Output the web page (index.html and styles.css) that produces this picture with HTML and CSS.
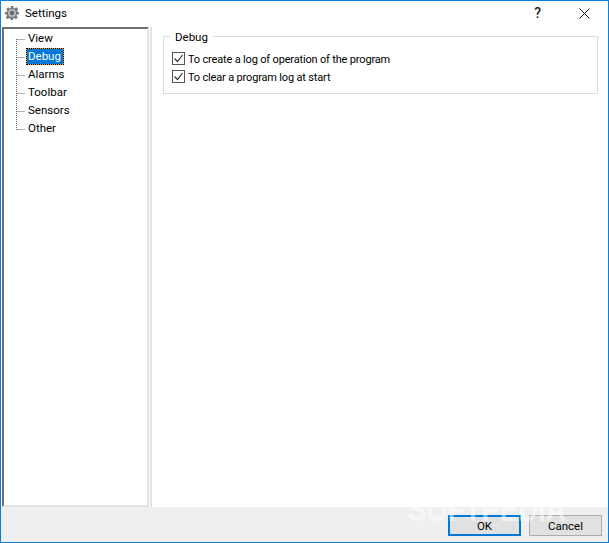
FILE: index.html
```html
<!DOCTYPE html>
<html lang="en">
<head>
<meta charset="utf-8">
<title>Settings</title>
<link rel="stylesheet" href="styles.css">
</head>
<body>
<div class="window">
  <header class="titlebar">
    <svg class="app-icon" viewBox="0 0 16 16" width="14" height="14">
      <path fill="#787878" d="M6.600 0h2.800l.4 2.200 1.300.6L13 1.500l2 2-1.300 1.900.6 1.300L16 7v2.400l-2.200.4-.6 1.300 1.300 1.900-2 2-1.900-1.300-1.300.6-.4 2.200H6.600l-.4-2.200-1.300-.6L3 15l-2-2 1.300-1.900-.6-1.300L0 9.400V7l2.200-.4.6-1.300L1.500 3.500l2-2 1.900 1.300 1.300-.6z"/>
      <circle cx="8" cy="8" r="4.600" fill="#bcbcbc"/>
      <circle cx="8" cy="8" r="2.600" fill="#666"/>
    </svg>
    <span class="title">Settings</span>
    <span class="help">?</span>
    <svg class="close" viewBox="0 0 11 11" width="11" height="11">
      <path d="M.5.5l10 10M10.500.5l-10 10" stroke="#1a1a1a" stroke-width="1" fill="none"/>
    </svg>
  </header>
  <main class="content">
    <nav class="tree">
      <svg class="tree-lines" width="10" height="92" viewBox="0 0 10 92">
        <path d="M.5 0V91M.5.5H9M.5 18.500H9M.5 36.500H9M.5 54.500H9M.5 72.500H9M.5 90.500H9" stroke="#666" stroke-width="1" stroke-dasharray="1 1" fill="none"/>
      </svg>
      <ul class="tree-list">
        <li class="tree-item"><span class="tree-label">View</span></li>
        <li class="tree-item"><span class="tree-label selected">Debug</span></li>
        <li class="tree-item"><span class="tree-label">Alarms</span></li>
        <li class="tree-item"><span class="tree-label">Toolbar</span></li>
        <li class="tree-item"><span class="tree-label">Sensors</span></li>
        <li class="tree-item"><span class="tree-label">Other</span></li>
      </ul>
    </nav>
    <section class="panel">
      <fieldset class="group">
        <legend class="group-title">Debug</legend>
        <label class="check"><span class="box"><svg viewBox="0 0 13 13" width="13" height="13"><path d="M2.500 6.500l3 3 5-6.500" stroke="#333" stroke-width="1.200" fill="none"/></svg></span>To create a log of operation of the program</label>
        <label class="check"><span class="box"><svg viewBox="0 0 13 13" width="13" height="13"><path d="M2.500 6.500l3 3 5-6.500" stroke="#333" stroke-width="1.200" fill="none"/></svg></span>To clear a program log at start</label>
      </fieldset>
    </section>
  </main>
  <footer class="footer">
    <button class="btn btn-default">OK</button>
    <button class="btn">Cancel</button>
    <span class="watermark">SOFTPEDIA</span>
    <span class="reg">®</span>
  </footer>
</div>
</body>
</html>
```
FILE: styles.css
```css
html, body { margin: 0; padding: 0; }
body { width: 609px; height: 543px; overflow: hidden; font-family: Roboto, "Liberation Sans", Arial, sans-serif; font-size: 11px; letter-spacing: -0.17px; color: #000; }
.window { box-sizing: border-box; width: 609px; height: 543px; border: 1px solid #0a7fdc; background: #fff; display: flex; flex-direction: column; }
.titlebar { box-sizing: border-box; height: 26px; display: flex; align-items: center; padding: 0 0 2px 4px; flex: none; }
.app-icon { flex: none; }
.title { margin-left: 6px; font-size: 11.500px; letter-spacing: 0; }
.help { margin-left: auto; margin-right: 2px; font-size: 14px; font-weight: 500; color: #222; }
.close { margin: 0 18px 0 36px; }
.content { flex: 1; display: flex; padding-left: 1px; gap: 1px; min-height: 0; }
.tree { box-sizing: border-box; width: 147px; border: 2px solid #e3e3e3; border-top-color: #6e6e6e; border-left-color: #6e6e6e; position: relative; background: #fff; }
.tree-lines { position: absolute; left: 12px; top: 10px; }
.tree-list { list-style: none; margin: 0 0 0 22px; padding: 0; }
.tree-item { height: 18px; display: flex; align-items: center; font-size: 11.500px; letter-spacing: 0; }
.tree-label { box-sizing: border-box; height: 17px; line-height: 15px; padding: 0 2px 0 1px; border: 1px solid transparent; }
.selected { background: #0078d7; color: #fff; border-color: #f59a23; outline: 1px dotted #000; outline-offset: -1px; }
.panel { flex: 1; box-sizing: border-box; border-left: 2px solid #e3e3e3; padding-left: 11px; background: #fff; }
.group { box-sizing: border-box; margin: 1px 0 0; padding: 6px 0 0 8px; border: 1px solid #dcdcdc; height: 66px; width: 435px; }
.group-title { padding: 2px 5px 0; margin-left: -2px; line-height: 14px; font-size: 11.500px; letter-spacing: 0; }
.check { display: flex; height: 18px; line-height: 20px; }
.box { width: 13px; height: 13px; box-sizing: border-box; border: 1px solid #555; margin: 2px 3px 0 0; display: flex; flex: none; }
.box svg { margin: -1px; flex: none; }
.footer { height: 35px; flex: none; background: #efefef; display: flex; align-items: flex-start; justify-content: flex-end; gap: 8px; padding: 8px 6px 0 0; box-sizing: border-box; position: relative; }
.btn { box-sizing: border-box; width: 73px; height: 21px; border: 1px solid #adadad; background: #e1e1e1; font: 11.500px Roboto, "Liberation Sans", Arial, sans-serif; padding: 0; color: #000; }
.btn-default { border: 2px solid #0078d7; }
.watermark { position: absolute; left: 407px; top: -10px; font: bold 34px/24px "Liberation Sans", Arial, sans-serif; letter-spacing: 0; color: rgba(255,255,255,.5); transform: scaleX(.81); transform-origin: left top; white-space: nowrap; pointer-events: none; }
.reg { position: absolute; left: 568px; top: -17px; font-size: 10px; color: rgba(255,255,255,.6); }
```
